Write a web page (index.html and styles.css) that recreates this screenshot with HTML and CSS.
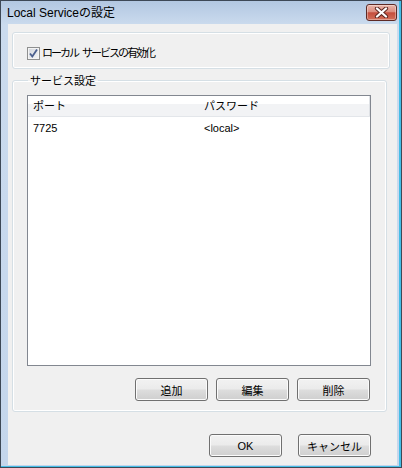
FILE: index.html
```html
<!DOCTYPE html>
<html lang="ja">
<head>
    <meta charset="UTF-8">
    <meta name="viewport" content="width=device-width, initial-scale=1.0">
    <title>Local Serviceの設定</title>
    <link rel="stylesheet" href="styles.css">
</head>
<body>

<div class="window">
    <div class="titlebar">
        <span class="title">Local Serviceの設定</span>
        <button class="close-btn" type="button">
            <svg width="15" height="11" viewBox="0 0 15 11">
                <path d="M3 1.5 L12 9.5 M12 1.5 L3 9.5" stroke="#5a2620" stroke-width="4.2" stroke-linecap="round"/>
                <path d="M3 1.5 L12 9.5 M12 1.5 L3 9.5" stroke="#ffffff" stroke-width="2.3" stroke-linecap="round"/>
            </svg>
        </button>
    </div>

    <div class="client">
        <div class="group enable-group">
            <label class="check">
                <span class="checkbox">
                    <svg width="11" height="11" viewBox="0 0 11 11">
                        <path d="M2 5.5 L4.3 8.5 L9 1.5" fill="none" stroke="#4b5f8e" stroke-width="1.8"/>
                    </svg>
                </span>
                <span class="check-text">ローカル サービスの有効化</span>
            </label>
        </div>

        <fieldset class="group service-group">
            <legend>サービス設定</legend>

            <div class="listview">
                <div class="lv-header">
                    <div class="col">ポート</div>
                    <div class="col">パスワード</div>
                </div>
                <div class="lv-row">
                    <div class="col">7725</div>
                    <div class="col">&lt;local&gt;</div>
                </div>
            </div>

            <div class="button-row">
                <button class="btn" type="button">追加</button>
                <button class="btn" type="button">編集</button>
                <button class="btn" type="button">削除</button>
            </div>
        </fieldset>

        <div class="dialog-buttons">
            <button class="btn" type="button">OK</button>
            <button class="btn" type="button">キャンセル</button>
        </div>
    </div>
</div>

</body>
</html>
```

FILE: styles.css
```css
body {
    margin: 0;
    font-family: "Liberation Sans", "Noto Sans CJK JP", sans-serif;
    font-size: 11px;
    color: #000;
}

.window {
    width: 402px;
    height: 468px;
    box-sizing: border-box;
    border: 1px solid #3d4856;
    background: linear-gradient(#b2c7e1, #cbdbee 24px, #c4d6ec);
    box-shadow: inset -2px -1px 0 #45bde6;
    display: flex;
    flex-direction: column;
}

.titlebar {
    height: 23px;
    display: flex;
    align-items: center;
    padding: 0 4px 0 6px;
}

.title {
    font-size: 12px;
    line-height: 14px;
}

.close-btn {
    margin-left: auto;
    width: 31px;
    height: 17px;
    padding: 0;
    border: 1px solid #5e2a25;
    border-radius: 3px;
    background: linear-gradient(#eab5aa, #dc8e80 45%, #c54e3d 52%, #d2705a);
    box-shadow: inset 0 0 0 1px rgba(255, 255, 255, 0.35);
    display: flex;
    align-items: center;
    justify-content: center;
}

.client {
    flex: 1;
    margin: 0 4px 2px 7px;
    padding: 8px 7px 0 4px;
    background-color: #f0f0f0;
    display: flex;
    flex-direction: column;
}

.group {
    border: 1px solid #d5dfe5;
    border-radius: 3px;
    box-shadow: inset 0 0 0 1px #fff;
}

.enable-group {
    height: 37px;
    box-sizing: border-box;
    padding: 14px 0 0 14px;
}

.check {
    display: flex;
    align-items: center;
    gap: 2px;
    line-height: 13px;
}

.check-text {
    letter-spacing: -2px;
    word-spacing: 3px;
}

.checkbox {
    width: 13px;
    height: 13px;
    box-sizing: border-box;
    border: 1px solid #8e8f8f;
    background: linear-gradient(135deg, #d2d6dc, #f6f7f8);
    box-shadow: inset 0 0 0 1px #f4f4f4;
    display: flex;
    align-items: center;
    justify-content: center;
}

.service-group {
    margin: 4px 3px 0 0;
    padding: 0 15px 10px 14px;
    min-width: 0;
}

.service-group legend {
    margin-left: 1px;
    padding: 2px 2px 0;
    line-height: 13px;
}

.listview {
    margin-top: 7px;
    height: 271px;
    box-sizing: border-box;
    border: 1px solid #828790;
    background-color: #fff;
}

.lv-header {
    display: flex;
    height: 21px;
    box-sizing: border-box;
    border-bottom: 1px solid #e3e6ea;
    background: linear-gradient(#fff 0, #fff 42%, #f2f3f5 42%, #f2f3f5 100%);
}

.lv-header .col {
    padding-top: 1px;
    line-height: 19px;
}

.lv-header .col:last-child {
    border-right: 1px solid #dfe2e6;
}

.lv-row {
    display: flex;
    padding-top: 3px;
    line-height: 17px;
}

.col {
    width: 171px;
    box-sizing: border-box;
    padding-left: 5px;
}

.button-row {
    display: flex;
    justify-content: flex-end;
    gap: 8px;
    margin: 12px 1px 0 0;
}

.btn {
    width: 73px;
    height: 23px;
    padding: 0;
    border: 1px solid #707070;
    border-radius: 3px;
    background: linear-gradient(#f2f2f2, #ebebeb 48%, #dddddd 52%, #cfcfcf);
    box-shadow: inset 0 0 0 1px #fbfbfb;
    font-family: inherit;
    font-size: 11px;
    color: #000;
}

.dialog-buttons {
    display: flex;
    justify-content: flex-end;
    gap: 16px;
    margin: 22px 19px 0 0;
}
```
